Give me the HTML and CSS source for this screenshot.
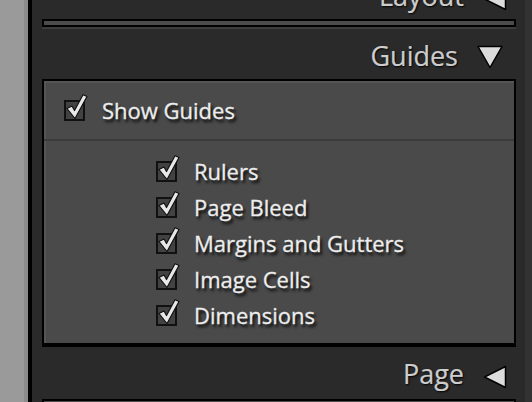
FILE: index.html
```html
<!DOCTYPE html>
<html lang="en">
<head>
  <meta charset="UTF-8">
  <title>Guides Panel</title>
  <link rel="stylesheet" href="styles.css">
</head>
<body>
  <div class="gutter"></div>

  <div class="panel">
    <div class="panel-header first">
      <span class="panel-title">Layout</span>
      <svg class="arrow-left" width="24" height="24" viewBox="0 0 24 24"><polygon points="1.5,12 22.5,1.5 22.5,22.5" /></svg>
    </div>
    <div class="stub"></div>

    <div class="panel-header">
      <span class="panel-title">Guides</span>
      <svg class="arrow-down" width="28" height="24" viewBox="0 0 28 24"><polygon points="1,1.5 25,1.5 13,22.5" /></svg>
    </div>

    <div class="box">
      <div class="row main-row">
        <svg class="check" width="24" height="27" viewBox="0 0 24 27">
          <rect x="1" y="7" width="19" height="19" />
          <polygon points="3,14.5 8,12 10.5,16.5 19,0.8 23,2.5 11,24.5" />
        </svg>
        <span>Show Guides</span>
      </div>
      <div class="sub-list">
        <div class="row"><svg class="check" width="24" height="27" viewBox="0 0 24 27"><rect x="1" y="7" width="19" height="19" /><polygon points="3,14.5 8,12 10.5,16.5 19,0.8 23,2.5 11,24.5" /></svg><span>Rulers</span></div>
        <div class="row"><svg class="check" width="24" height="27" viewBox="0 0 24 27"><rect x="1" y="7" width="19" height="19" /><polygon points="3,14.5 8,12 10.5,16.5 19,0.8 23,2.5 11,24.5" /></svg><span>Page Bleed</span></div>
        <div class="row"><svg class="check" width="24" height="27" viewBox="0 0 24 27"><rect x="1" y="7" width="19" height="19" /><polygon points="3,14.5 8,12 10.5,16.5 19,0.8 23,2.5 11,24.5" /></svg><span>Margins and Gutters</span></div>
        <div class="row"><svg class="check" width="24" height="27" viewBox="0 0 24 27"><rect x="1" y="7" width="19" height="19" /><polygon points="3,14.5 8,12 10.5,16.5 19,0.8 23,2.5 11,24.5" /></svg><span>Image Cells</span></div>
        <div class="row"><svg class="check" width="24" height="27" viewBox="0 0 24 27"><rect x="1" y="7" width="19" height="19" /><polygon points="3,14.5 8,12 10.5,16.5 19,0.8 23,2.5 11,24.5" /></svg><span>Dimensions</span></div>
      </div>
    </div>

    <div class="panel-header">
      <span class="panel-title">Page</span>
      <svg class="arrow-left" width="24" height="24" viewBox="0 0 24 24"><polygon points="1.5,12 22.5,1.5 22.5,22.5" /></svg>
    </div>
    <div class="stub next"></div>
  </div>
</body>
</html>
```

FILE: styles.css
```css
html, body {
  height: 100%;
}
body {
  margin: 0;
  display: flex;
  overflow: hidden;
  background-color: #9a9a9a;
  font-family: "Open Sans", "Liberation Sans", sans-serif;
}
.gutter {
  width: 24px;
  border-right: 4px solid #8b8b8b;
  flex-shrink: 0;
}
.panel {
  flex: 1;
  background-color: #2a2a2a;
  border-left: 4px solid #000;
  border-right: 7px solid #323232;
  padding: 0 9px 0 10px;
  overflow: hidden;
}
.panel-header {
  height: 50px;
  box-sizing: border-box;
  padding: 13px 9px 0 0;
  display: flex;
  justify-content: flex-end;
  align-items: flex-start;
  gap: 19px;
}
.panel-header.first {
  margin-top: -31px;
}
.panel-title {
  font-size: 27px;
  line-height: 27px;
  color: #cdcdcd;
  -webkit-text-stroke: 0.2px #cdcdcd;
  text-shadow: 1px 1px 2px #000;
}
.panel-header svg polygon {
  fill: #dcdcdc;
  stroke: #000;
  stroke-width: 1.5;
  stroke-linejoin: round;
}
.arrow-down {
  margin-top: 3px;
  margin-right: 2px;
}
.arrow-left {
  margin-top: 5px;
}
.stub {
  height: 4px;
  background-color: #4b4b4b;
  border: 2px solid #000;
  box-shadow: 0 2px 0 #3c3c3c;
  margin-bottom: 2px;
}
.stub.next {
  margin-top: 2px;
}
.box {
  background-color: #4a4a4a;
  border: 2px solid #000;
  border-bottom-width: 4px;
  box-shadow: inset 2px 2px 0 #555;
}
.row {
  display: flex;
  align-items: center;
  gap: 14px;
  height: 36px;
  font-size: 22px;
  color: #ededed;
  -webkit-text-stroke: 0.3px #ededed;
  text-shadow: 2px 3px 3px rgba(0, 0, 0, 0.95);
}
.main-row {
  height: 58px;
  padding-left: 20px;
  gap: 14px;
  border-bottom: 2px solid #3b3b3b;
}
.sub-list {
  padding: 12px 0 10px 112px;
}
.check {
  margin-top: -6px;
  flex-shrink: 0;
}
.check rect {
  fill: #424242;
  stroke: #111;
  stroke-width: 2;
}
.check polygon {
  fill: #e8e8e8;
  stroke: #111;
  stroke-width: 1.2;
  stroke-linejoin: round;
}
```
